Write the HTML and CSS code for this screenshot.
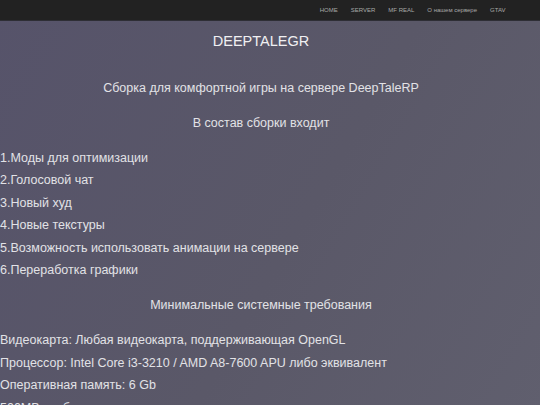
FILE: index.html
```html
<!DOCTYPE html>
<html lang="ru">
<head>
<meta charset="utf-8">
<title>DEEPTALEGR</title>
<link rel="stylesheet" href="styles.css">
</head>
<body>
<header class="topbar">
  <nav class="menu">
    <a href="#">HOME</a>
    <a href="#">SERVER</a>
    <a href="#">MF REAL</a>
    <a href="#">О нашем сервере</a>
    <a href="#">GTAV</a>
  </nav>
</header>
<main class="content">
  <h1 class="title">DEEPTALEGR</h1>
  <p class="center first">Сборка для комфортной игры на сервере DeepTaleRP</p>
  <p class="center">В состав сборки входит</p>
  <ul class="lines">
    <li>1.Моды для оптимизации</li>
    <li>2.Голосовой чат</li>
    <li>3.Новый худ</li>
    <li>4.Новые текстуры</li>
    <li>5.Возможность использовать анимации на сервере</li>
    <li>6.Переработка графики</li>
  </ul>
  <p class="center">Минимальные системные требования</p>
  <ul class="lines">
    <li>Видеокарта: Любая видеокарта, поддерживающая OpenGL</li>
    <li>Процессор: Intel Core i3-3210 / AMD A8-7600 APU либо эквивалент</li>
    <li>Оперативная память: 6 Gb</li>
    <li>500MB свободного пространства на диске</li>
  </ul>
</main>
</body>
</html>
```

FILE: styles.css
```css
html, body {
  margin: 0;
  padding: 0;
}
body {
  font-family: "Liberation Sans", Arial, sans-serif;
  color: #e2e2e6;
  background: linear-gradient(120deg, #56536a 0%, #5a5868 55%, #605f6e 100%);
  min-height: 405px;
  overflow: hidden;
}
.topbar {
  height: 20px;
  background: #222222;
  border-bottom: 1px solid #2e2e35;
  display: flex;
  justify-content: flex-end;
  padding-right: 28px;
}
.menu {
  display: flex;
  align-items: center;
}
.menu a {
  font-size: 6px;
  color: #a8a8a8;
  text-decoration: none;
  padding: 0 6.5px;
  line-height: 20px;
}
.content {
  width: 522px;
}
.title {
  margin: 0;
  padding-top: 10px;
  font-size: 14.5px;
  font-weight: normal;
  text-align: center;
  color: #f0f0f2;
  line-height: 20px;
}
.center {
  text-align: center;
  font-size: 12.5px;
  line-height: 22px;
  margin: 13px 0;
}
.center.first {
  margin-top: 26px;
}
.lines {
  list-style: none;
  margin: 0;
  padding: 0;
  font-size: 12.5px;
  line-height: 22.4px;
}
```
